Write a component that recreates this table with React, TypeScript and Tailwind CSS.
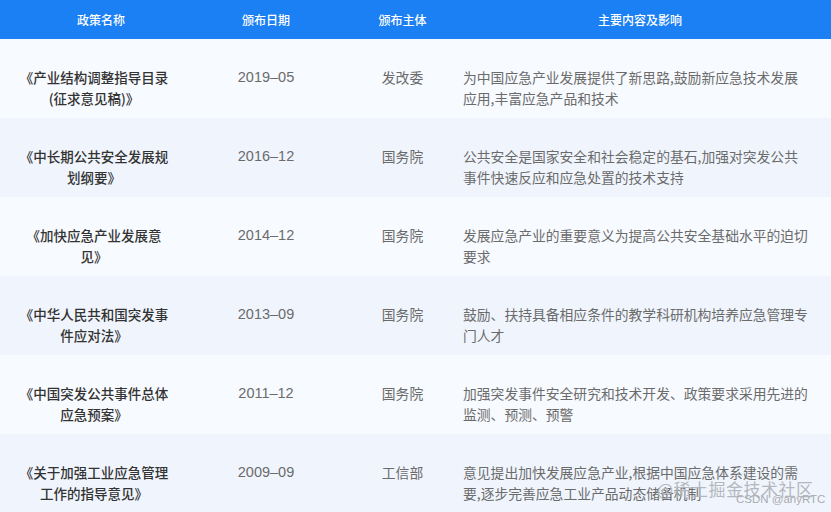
import React from "react";

const rows = [
  { name: ["《产业结构调整指导目录", "(征求意见稿)》"], date: "2019–05", org: "发改委", content: ["为中国应急产业发展提供了新思路,鼓励新应急技术发展", "应用,丰富应急产品和技术"] },
  { name: ["《中长期公共安全发展规", "划纲要》"], date: "2016–12", org: "国务院", content: ["公共安全是国家安全和社会稳定的基石,加强对突发公共", "事件快速反应和应急处置的技术支持"] },
  { name: ["《加快应急产业发展意", "见》"], date: "2014–12", org: "国务院", content: ["发展应急产业的重要意义为提高公共安全基础水平的迫切", "要求"] },
  { name: ["《中华人民共和国突发事", "件应对法》"], date: "2013–09", org: "国务院", content: ["鼓励、扶持具备相应条件的教学科研机构培养应急管理专", "门人才"] },
  { name: ["《中国突发公共事件总体", "应急预案》"], date: "2011–12", org: "国务院", content: ["加强突发事件安全研究和技术开发、政策要求采用先进的", "监测、预测、预警"] },
  { name: ["《关于加强工业应急管理", "工作的指导意见》"], date: "2009–09", org: "工信部", content: ["意见提出加快发展应急产业,根据中国应急体系建设的需", "要,逐步完善应急工业产品动态储备机制"] },
];

const font = { fontFamily: '"PingFang SC", "Noto Sans CJK SC", "Noto Sans", sans-serif' };
const digitFont = { fontFamily: '"Liberation Sans", "Noto Sans CJK SC", sans-serif' };

export default function App() {
  return (
    <div className="relative w-[831px] h-[512px] overflow-hidden bg-[#f5f8fd]" style={font}>
      <div className="grid grid-cols-[202px_128px_133px_1fr] h-[39px] bg-[#1b80f3] text-white text-[12px] font-medium items-center">
        <div className="text-center">政策名称</div>
        <div className="text-center">颁布日期</div>
        <div className="text-center pl-3">颁布主体</div>
        <div className="text-center pr-[14px]">主要内容及影响</div>
      </div>
      {rows.map((r, i) => (
        <div
          key={i}
          className={`grid grid-cols-[202px_128px_133px_1fr] h-[79px] pt-[28px] text-[13.8px] leading-[21px] ${i % 2 === 0 ? "bg-[#f7faff]" : "bg-[#f0f5fd]"}`}
        >
          <div className="text-center text-[#333333] font-medium pr-[14px] text-[13.5px]">
            {r.name.map((l, j) => (
              <div key={j}>{l}</div>
            ))}
          </div>
          <div className="text-center text-[#6b6b6b] text-[14.5px]" style={digitFont}>{r.date}</div>
          <div className="text-center text-[#6b6b6b] pl-3">{r.org}</div>
          <div className="text-[#6b6b6b] whitespace-nowrap">
            {r.content.map((l, j) => (
              <div key={j}>{l}</div>
            ))}
          </div>
        </div>
      ))}
      <div className="absolute left-[657px] top-[477px] whitespace-nowrap text-[17px] text-[#b4b8be] tracking-[0.5px] leading-[24px]">@稀土掘金技术社区</div>
      <div className="absolute left-[736px] top-[492px] whitespace-nowrap text-[11.5px] text-[#a9abb0] leading-[14px]" style={{ fontFamily: '"Liberation Sans", sans-serif' }}>CSDN @anyRTC</div>
    </div>
  );
}
